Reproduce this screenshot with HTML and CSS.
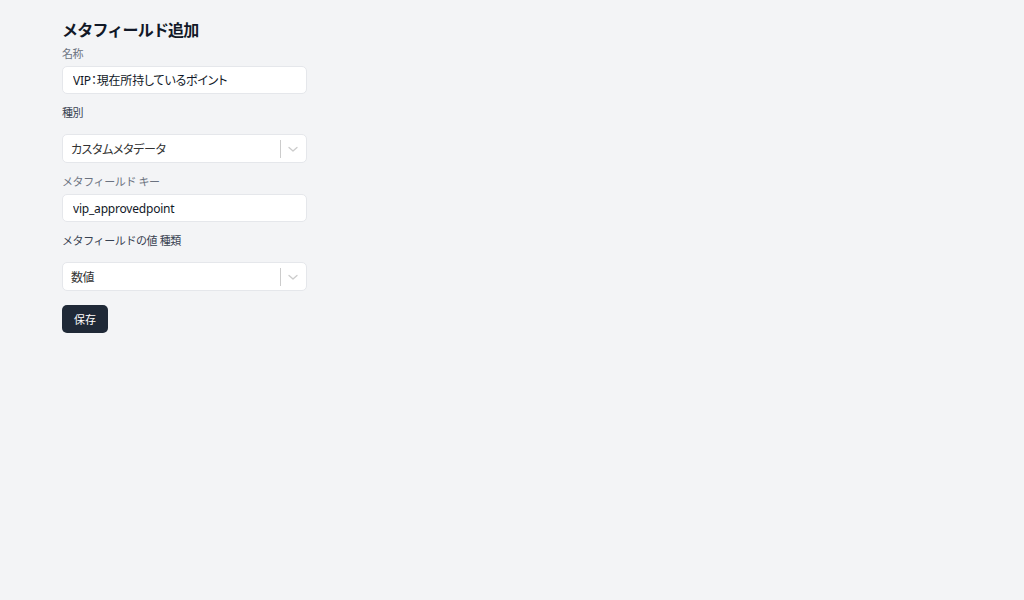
FILE: index.html
```html
<!DOCTYPE html>
<html lang="ja">
  <head>
    <meta charset="UTF-8" />
    <meta name="viewport" content="width=device-width, initial-scale=1.0" />
    <title>メタフィールド追加</title>
    <link rel="stylesheet" href="styles.css">
  </head>
  <body>
    <div class="page">
      <h1>メタフィールド追加</h1>
      <form class="form">
        <label class="label muted" for="name">名称</label>
        <input class="field" id="name" type="text" value="VIP：現在所持しているポイント" />

        <div class="label strong">種別</div>
        <div class="select">
          <span class="select-value">カスタムメタデータ</span>
          <span class="select-sep"></span>
          <svg class="select-arrow" width="10" height="10" viewBox="0 0 10 10">
            <path d="M1 3.5l4 3.5 4-3.5" fill="none" stroke="currentColor" stroke-width="1.3" stroke-linecap="round" stroke-linejoin="round"/>
          </svg>
        </div>

        <label class="label muted" for="key">メタフィールド キー</label>
        <input class="field" id="key" type="text" value="vip_approvedpoint" />

        <div class="label strong">メタフィールドの値 種類</div>
        <div class="select">
          <span class="select-value">数値</span>
          <span class="select-sep"></span>
          <svg class="select-arrow" width="10" height="10" viewBox="0 0 10 10">
            <path d="M1 3.5l4 3.5 4-3.5" fill="none" stroke="currentColor" stroke-width="1.3" stroke-linecap="round" stroke-linejoin="round"/>
          </svg>
        </div>

        <button class="save" type="button">保存</button>
      </form>
    </div>
  </body>
</html>
```

FILE: styles.css
```css
body {
  margin: 0;
  padding: 0;
  background-color: #f3f4f6;
  font-family: "Noto Sans", "Noto Sans CJK JP", sans-serif;
  color: #111827;
}

.page {
  padding: 20px 62px;
  width: 245px;
}

.page h1 {
  font-size: 16px;
  line-height: 20px;
  font-weight: bold;
  letter-spacing: -0.8px;
  margin: 0 0 6px 0;
}

.form {
  display: flex;
  flex-direction: column;
}

/* Labels */
.label {
  font-size: 11px;
  line-height: 16px;
  letter-spacing: -0.4px;
}

.label.muted {
  color: #6b7280;
  margin-bottom: 4px;
}

.label.strong {
  color: #374151;
  margin-top: 11px;
  margin-bottom: 13px;
}

.select + .label.muted {
  margin-top: 11px;
}

/* Inputs */
.field {
  height: 28px;
  box-sizing: border-box;
  padding: 0 10px;
  font-family: inherit;
  font-size: 12px;
  font-feature-settings: "palt";
  letter-spacing: -0.2px;
  color: #111827;
  background: white;
  border: 1px solid #e5e7eb;
  border-radius: 5px;
  outline: none;
}

.select {
  display: flex;
  align-items: center;
  height: 29px;
  box-sizing: border-box;
  padding: 0 8px 0 8px;
  background: white;
  border: 1px solid #e5e7eb;
  border-radius: 5px;
}

.select-value {
  flex: 1;
  font-size: 12px;
  font-feature-settings: "palt";
  letter-spacing: -0.4px;
  color: #333;
}

.select-sep {
  width: 1px;
  height: 18px;
  background-color: #cccccc;
  margin-right: 7px;
}

.select-arrow {
  color: #cccccc;
}

/* Button */
.save {
  align-self: flex-start;
  margin-top: 14px;
  height: 28px;
  width: 46px;
  padding: 0;
  border: none;
  border-radius: 5px;
  background-color: #1f2937;
  color: white;
  font-family: inherit;
  font-size: 11px;
  cursor: pointer;
}
```
